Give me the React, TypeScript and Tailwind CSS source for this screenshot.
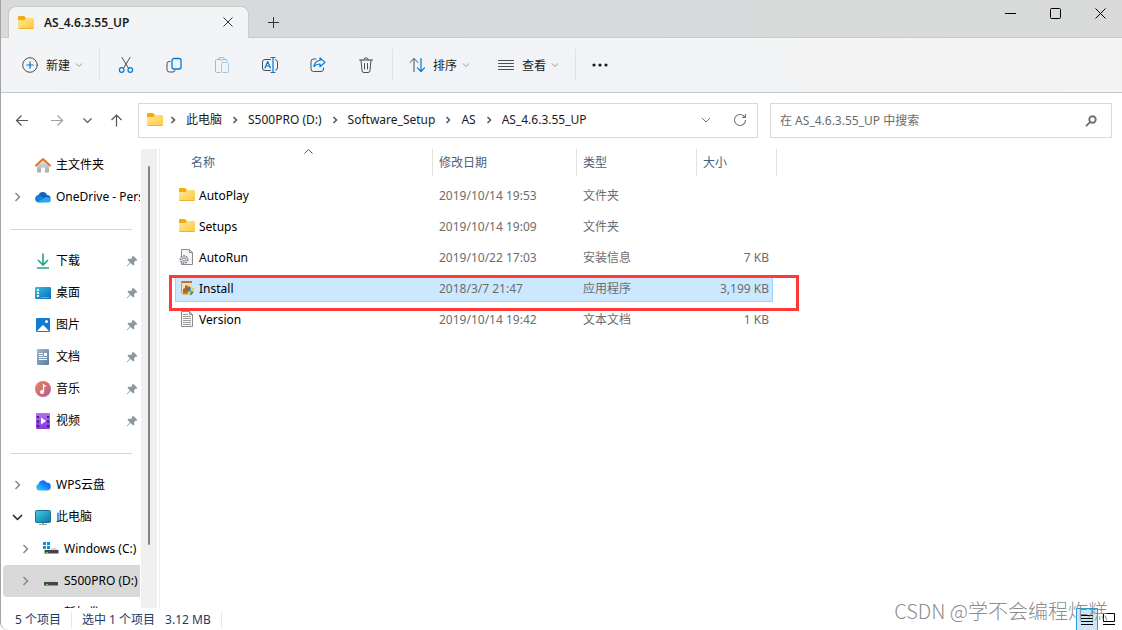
import type { ReactNode } from "react";

type IconProps = { className?: string };

const Chevron = ({ className = "" }: IconProps) => (
  <svg viewBox="0 0 8 8" className={`h-2 w-2 shrink-0 ${className}`} fill="none" stroke="currentColor">
    <path d="M2.5 1 5.5 4 2.5 7" />
  </svg>
);

const FolderIcon = () => (
  <svg viewBox="0 1 16 16" className="h-4 w-4 shrink-0">
    <defs>
      <linearGradient id="folder" x1="0" y1="0" x2="1" y2="1">
        <stop offset="0" stopColor="#ffe79c" />
        <stop offset="1" stopColor="#ffc93c" />
      </linearGradient>
    </defs>
    <path d="M0 3a1 1 0 0 1 1-1h5l2 2h7v9H1a1 1 0 0 1-1-1z" fill="#f2ac0c" />
    <path d="M0 6h6.5L8 4h7a1 1 0 0 1 1 1v9a1 1 0 0 1-1 1H1a1 1 0 0 1-1-1z" fill="url(#folder)" />
    <path d="M.5 14.500h15" stroke="#e9ae26" strokeWidth=".8" />
  </svg>
);

const HomeIcon = () => (
  <svg viewBox="0 0 16 16" className="h-4 w-4 shrink-0">
    <defs>
      <linearGradient id="wall" x1="0" y1="0" x2="0" y2="1">
        <stop offset="0" stopColor="#e6e6e6" />
        <stop offset="1" stopColor="#a6a6a6" />
      </linearGradient>
    </defs>
    <path d="M2 8 8 3l6 5v6.500a1 1 0 0 1-1 1h-3v-5H6v5H3a1 1 0 0 1-1-1z" fill="url(#wall)" />
    <path d="M1 8.500 8 2l7 6.500" fill="none" stroke="#e57622" strokeWidth="2" strokeLinecap="round" strokeLinejoin="round" />
  </svg>
);

const OneDriveIcon = () => (
  <svg viewBox="0 0 16 16" className="h-4 w-4 shrink-0">
    <path d="M1 11.500A3.500 3.500 0 0 1 3.500 6a4.500 4.500 0 0 1 8.500 0 3.700 3.700 0 0 1 3.500 4z" fill="#0b63c0" />
    <path d="M3.500 13.500a3.400 3.400 0 0 1-2.500-5.500c2-2.200 5-1.500 6 0l7 4.500z" fill="#1580d8" />
    <path d="m3 13 6-4c2-1.300 4-1 5-.3 2.800 1.500 2.200 4.800-.8 4.800H4.500z" fill="#2aa6ee" />
  </svg>
);

const DownloadIcon = () => (
  <svg viewBox="0 0 16 16" className="h-4 w-4 shrink-0" fill="none" stroke="#1fa883" strokeWidth="1.600">
    <path d="M8 .5v11M3 7l5 5 5-5M2 15h12" />
  </svg>
);

const DesktopIcon = () => (
  <svg viewBox="0 0 16 16" className="h-4 w-4 shrink-0">
    <defs>
      <linearGradient id="screen" x1="0" y1="0" x2="1" y2="1">
        <stop offset="0" stopColor="#33c5e0" />
        <stop offset="1" stopColor="#0a68b5" />
      </linearGradient>
    </defs>
    <rect y="2" width="16" height="12" rx="1" fill="url(#screen)" />
    <path d="M2 4h2v2H2zM2 7h2v2H2zM2 10h2v2H2z" fill="#fff" />
    <path d="M6 12.500h8" stroke="#54b6df" />
  </svg>
);

const PicturesIcon = () => (
  <svg viewBox="0 0 16 16" className="h-4 w-4 shrink-0">
    <rect x="1" y="1" width="14" height="14" rx="1" fill="#137bd0" />
    <path d="m2 14 5.300-5.500a1 1 0 0 1 1.400 0L14 14z" fill="#fff" />
    <circle cx="11.500" cy="4.500" r="1.500" fill="#fff" />
  </svg>
);

const DocumentsIcon = () => (
  <svg viewBox="0 0 16 16" className="h-4 w-4 shrink-0">
    <defs>
      <linearGradient id="doc" x1="0" y1="0" x2="1" y2="1">
        <stop offset="0" stopColor="#a4b8cd" />
        <stop offset="1" stopColor="#5a7c9f" />
      </linearGradient>
    </defs>
    <rect x="2" y="0" width="12" height="16" rx="1" fill="url(#doc)" />
    <path d="M4 4.500h4M4 6.500h4M4 8.500h8M4 10.500h8" stroke="#fff" />
    <path d="M9 4h3v3H9z" fill="#fff" />
  </svg>
);

const MusicIcon = () => (
  <svg viewBox="0 0 16 16" className="h-4 w-4 shrink-0">
    <defs>
      <linearGradient id="music" x1="0" y1="0" x2="1" y2="1">
        <stop offset="0" stopColor="#ec8550" />
        <stop offset="1" stopColor="#b25c9c" />
      </linearGradient>
    </defs>
    <circle cx="8" cy="8" r="8" fill="url(#music)" />
    <circle cx="7" cy="11" r="2" fill="#fff" />
    <path d="M8.500 11V4l2.500 1.500" fill="none" stroke="#fff" strokeWidth="1.300" />
  </svg>
);

const VideosIcon = () => (
  <svg viewBox="0 0 16 16" className="h-4 w-4 shrink-0">
    <defs>
      <linearGradient id="video" x1="0" y1="0" x2="0" y2="1">
        <stop offset="0" stopColor="#b472ee" />
        <stop offset="1" stopColor="#8539dc" />
      </linearGradient>
    </defs>
    <rect x="1" y="0" width="14" height="16" rx="1" fill="url(#video)" />
    <path d="M3 3v11M13 3v11" stroke="#3b1d78" strokeWidth="2" strokeDasharray="2 2.500" />
    <path d="m6 4.500 5 3.500-5 3.500z" fill="#fff" />
  </svg>
);

const WpsCloudIcon = () => (
  <svg viewBox="0 0 16 16" className="h-4 w-4 shrink-0">
    <defs>
      <linearGradient id="wps" x1="0" y1="1" x2="1" y2="0">
        <stop offset="0" stopColor="#2be0f5" />
        <stop offset=".6" stopColor="#1479fb" />
        <stop offset="1" stopColor="#0a5cf0" />
      </linearGradient>
    </defs>
    <path d="M4 13.500a3.300 3.300 0 0 1-.5-6.400 4.300 4.300 0 0 1 8-1.600A4 4 0 0 1 12 13.500z" fill="url(#wps)" />
  </svg>
);

const ComputerIcon = () => (
  <svg viewBox="0 0 16 16" className="h-4 w-4 shrink-0">
    <defs>
      <linearGradient id="pc" x1="0" y1="0" x2="1" y2="1">
        <stop offset="0" stopColor="#40cfe0" />
        <stop offset="1" stopColor="#1272a8" />
      </linearGradient>
    </defs>
    <path d="M7 13h2v2H7zM4 15h8v1H4z" fill="#9aa5ad" />
    <rect x=".5" y="1.500" width="15" height="12" rx="1" fill="url(#pc)" stroke="#176f96" />
  </svg>
);

const DriveIcon = ({ windows }: { windows?: boolean }) => (
  <svg viewBox="0 0 16 16" className="h-4 w-4 shrink-0">
    <path d={windows ? "M8 7h5l2 2.500H8z" : "M3.500 7h9L15 9.500H1z"} fill="#d2d5d8" />
    <rect x={windows ? 1.5 : 1} y="9" width="14" height="3.500" rx=".5" fill="#454545" />
    <path d="M3 11.500h2" stroke="#63d450" />
    {windows && <path d="M0 1h3v3H0zM4 1h3v3H4zM0 5h3v3H0zM4 5h3v3H4z" fill="#138ed8" />}
  </svg>
);

const PinIcon = () => (
  <svg viewBox="0 0 12 12" className="h-3 w-3 shrink-0" fill="#8a979f">
    <path d="M7 .5 11.500 5l-1.400.8-.4-.2-1.600 1.600.2 2.300-1.100 1.100L4.600 8 1 11.400l-.4-.4L4 7.400 1.400 4.800l1.100-1.100 2.300.2L6.400 2.300l-.2-.4z" />
  </svg>
);

const ConfigFileIcon = () => (
  <svg viewBox="0 0 16 16" className="h-4 w-4 shrink-0" fill="none">
    <path d="M2.500.5h8l3 3v12h-11z" fill="#f7f7f7" stroke="#8b8b8b" />
    <path d="M10.500.5v3h3" stroke="#8b8b8b" />
    <circle cx="5" cy="10.500" r="3.700" fill="#dfe3e6" stroke="#78828a" strokeWidth="1.500" strokeDasharray="1.700 1" />
    <circle cx="5" cy="10.500" r="1.500" fill="#fff" stroke="#78828a" />
  </svg>
);

const TextFileIcon = () => (
  <svg viewBox="0 0 16 16" className="h-4 w-4 shrink-0" fill="none">
    <path d="M2.500.5h8l3 3v12h-11z" fill="#fafafa" stroke="#8b8b8b" />
    <path d="M10.500.5v3h3" stroke="#8b8b8b" />
    <path d="M4 3.500h5M4 5.500h8M4 7.500h8M4 9.500h8M4 11.500h8M4 13.500h8" stroke="#9c9c9c" />
  </svg>
);

const InstallerIcon = () => (
  <svg viewBox="0 0 16 16" className="h-4 w-4 shrink-0">
    <path d="M2 1h11v13H3.500L2 12z" fill="#f2ddb3" />
    <path d="M2 1h11v2H2z" fill="#b9762d" />
    <path d="M2 1h1v12H2z" fill="#d49a4e" />
    <path d="M4 9l2-1V6l2-1 1 2 2-1v7H4z" fill="#b5651d" />
    <path d="M3 13h6v1.500H4z" fill="#e08b1d" />
    <path d="M11.500 7.500 15 8.600c0 3.500-1 5.400-3.500 6.900C9 14 8 12 8 8.600z" fill="#2583d8" />
    <path d="M11.500 7.500 15 8.600V11.500h-3.500zM8.200 11.500h3.300v4c-1.800-1-2.900-2.300-3.300-4z" fill="#fbd12f" />
  </svg>
);

const ToolIcon = ({ children }: { children: ReactNode }) => (
  <svg viewBox="0 0 16 16" className="h-4 w-4 shrink-0" fill="none" stroke="#4d4d4d" strokeLinecap="round" strokeLinejoin="round">
    {children}
  </svg>
);

const tools = [
  {
    label: "剪切",
    icon: (
      <>
        <path d="m4 .5 6.200 10.300M12 .5 5.800 10.800" />
        <circle cx="3.700" cy="13" r="2.300" stroke="#0078d4" strokeWidth="1.200" />
        <circle cx="12.300" cy="13" r="2.300" stroke="#0078d4" strokeWidth="1.200" />
      </>
    ),
  },
  {
    label: "复制",
    icon: (
      <>
        <path d="M4 4.500H3a2 2 0 0 0-2 2v6a2.500 2.500 0 0 0 2.500 2.500H7a2 2 0 0 0 2-1.500" />
        <rect x="6" y="1.500" width="9" height="10.500" rx="2" stroke="#0078d4" strokeWidth="1.300" />
      </>
    ),
  },
  {
    label: "粘贴",
    icon: (
      <>
        <path d="M5 2.500H2.500a1 1 0 0 0-1 1v11a1 1 0 0 0 1 1H6M10 2.500h2a1 1 0 0 1 1 1V4M5 1.500A1 1 0 0 1 6 .6h3a1 1 0 0 1 0 2.400H6a1 1 0 0 1-1-1.500z" stroke="#b5b5b5" />
        <rect x="7.500" y="5.500" width="7" height="10" rx="1" stroke="#9fc9ea" />
      </>
    ),
  },
  {
    label: "重命名",
    icon: (
      <>
        <path d="M8.500 2.500H3A2.500 2.500 0 0 0 .5 5v6A2.500 2.500 0 0 0 3 13.500h5.500M13.500 2.700A2.500 2.500 0 0 1 15.500 5v6a2.500 2.500 0 0 1-2 2.300" />
        <path d="M9 .5h4M11 .5v15M9 15.500h4M3 11l2.700-6.500L8.400 11M4 9h3.500" stroke="#0078d4" strokeWidth="1.200" />
      </>
    ),
  },
  {
    label: "共享",
    icon: (
      <>
        <path d="M6 2H3.500A2.500 2.500 0 0 0 1 4.500v7.500a2.500 2.500 0 0 0 2.500 2.500H11a2.500 2.500 0 0 0 2.500-2.500v-1" />
        <path d="M10 1v2.500C6.500 3.600 4.500 6 4 9.500 5.500 7.700 7.500 7 10 7v2.800L15 5.400z" stroke="#0078d4" strokeWidth="1.200" />
      </>
    ),
  },
  {
    label: "删除",
    icon: <path d="M1.500 3h13M5.800 3a2.200 2.200 0 0 1 4.400 0M3 3l1 10.500A2 2 0 0 0 6 15.500h4a2 2 0 0 0 2-2L13 3M6.500 6.500v5.500M9.500 6.500v5.500" />,
  },
];

const places = [
  { name: "下载", icon: <DownloadIcon /> },
  { name: "桌面", icon: <DesktopIcon /> },
  { name: "图片", icon: <PicturesIcon /> },
  { name: "文档", icon: <DocumentsIcon /> },
  { name: "音乐", icon: <MusicIcon /> },
  { name: "视频", icon: <VideosIcon /> },
];

const crumbs = ["此电脑", "S500PRO (D:)", "Software_Setup", "AS", "AS_4.6.3.55_UP"];

const files = [
  { name: "AutoPlay", date: "2019/10/14 19:53", type: "文件夹", size: "", icon: <FolderIcon /> },
  { name: "Setups", date: "2019/10/14 19:09", type: "文件夹", size: "", icon: <FolderIcon /> },
  { name: "AutoRun", date: "2019/10/22 17:03", type: "安装信息", size: "7 KB", icon: <ConfigFileIcon /> },
  { name: "Install", date: "2018/3/7 21:47", type: "应用程序", size: "3,199 KB", icon: <InstallerIcon />, selected: true },
  { name: "Version", date: "2019/10/14 19:42", type: "文本文档", size: "1 KB", icon: <TextFileIcon /> },
];

interface NavRowProps {
  name: string;
  icon: ReactNode;
  arrow?: "right" | "down";
  nested?: boolean;
  pinned?: boolean;
  selected?: boolean;
}

const NavRow = ({ name, icon, arrow, nested, pinned, selected }: NavRowProps) => (
  <li>
    <a
      href="#"
      className={`flex h-8 items-center overflow-hidden whitespace-nowrap ${nested ? "pl-4" : "pl-2"} ${
        selected ? "rounded-l-sm bg-[#d9d9d9]" : ""
      }`}
    >
      <span className="flex w-6 shrink-0">
        {arrow && (
          <svg
            viewBox="0 0 12 12"
            className={`h-3 w-3 ${arrow === "down" ? "text-[#222]" : "text-[#888]"}`}
            fill="none"
            stroke="currentColor"
            strokeWidth="1.500"
          >
            <path d={arrow === "down" ? "M2 4 6.500 8.500 11 4" : "M4.500 2 8.500 6 4.500 10"} />
          </svg>
        )}
      </span>
      {icon}
      <span className="ml-[5px]">{name}</span>
      {pinned && (
        <span className="mr-[2px] ml-auto">
          <PinIcon />
        </span>
      )}
    </a>
  </li>
);

const NavDivider = () => (
  <li className="flex h-8 items-center px-2">
    <hr className="w-full border-[#d4d4d4]" />
  </li>
);

const TitleBar = () => (
  <header className="flex h-[38px] shrink-0 items-end border-b border-[#c8cccc] bg-linear-to-r from-[#dadada] via-[#d6dada] via-40% to-[#dadada]">
    <div className="-mb-px ml-[7px] flex h-8 w-[241px] items-center rounded-t-lg border border-b-0 border-[#c8cccc] bg-[#f3f4f6] pr-3 pl-[9px]">
      <FolderIcon />
      <span className="ml-[10px] font-semibold text-[#1b1b1b]">AS_4.6.3.55_UP</span>
      <button aria-label="关闭标签页" className="ml-auto flex h-4 w-4 items-center justify-center pb-[2px]">
        <svg viewBox="0 0 10 10" className="h-[10px] w-[10px]" stroke="#333">
          <path d="m.5.5 9 9M9.500.5l-9 9" />
        </svg>
      </button>
    </div>
    <button aria-label="新建标签页" className="flex h-[30px] w-12 items-center justify-center">
      <svg viewBox="0 0 11 11" className="h-[11px] w-[11px]" stroke="#333">
        <path d="M5.500 0v11M0 5.500h11" />
      </svg>
    </button>
    <div className="-mr-px ml-auto flex self-start text-black">
      <button aria-label="最小化" className="flex h-[26px] w-[45px] items-center justify-center">
        <svg viewBox="0 0 11 11" className="h-[11px] w-[11px]" stroke="currentColor">
          <path d="M0 5.500h11" />
        </svg>
      </button>
      <button aria-label="最大化" className="flex h-[26px] w-[45px] items-center justify-center">
        <svg viewBox="0 0 11 11" className="h-[11px] w-[11px]" fill="none" stroke="currentColor">
          <rect x=".5" y=".5" width="10" height="10" rx="1" />
        </svg>
      </button>
      <button aria-label="关闭" className="flex h-[26px] w-[45px] items-center justify-center">
        <svg viewBox="0 0 11 11" className="h-[11px] w-[11px]" stroke="currentColor">
          <path d="m.5.5 10 10M10.500.5l-10 10" />
        </svg>
      </button>
    </div>
  </header>
);

const Separator = () => <div className="h-8 w-px shrink-0 bg-[#e0e1e3]" />;

const Toolbar = () => (
  <div className="flex h-[55px] shrink-0 items-center border-b border-[#c2c8cb] bg-linear-to-r from-[#f3f4f6] via-[#f2f3f6] to-[#f4f4f3] pl-[21px]">
    <button className="flex w-[77px] items-center">
      <ToolIcon>
        <circle cx="8" cy="8" r="7.300" />
        <path d="M8 4.800v6.400M4.800 8h6.400" stroke="#0078d4" strokeWidth="1.200" />
      </ToolIcon>
      <span className="mt-px ml-2">新建</span>
      <Chevron className="ml-[5px] rotate-90 text-[#999]" />
    </button>
    <Separator />
    <div className="flex w-[292px] justify-center">
      {tools.map((tool) => (
        <button key={tool.label} aria-label={tool.label} title={tool.label} className="flex w-12 justify-center">
          <ToolIcon>{tool.icon}</ToolIcon>
        </button>
      ))}
    </div>
    <Separator />
    <button className="ml-4 flex items-center">
      <ToolIcon>
        <path d="M5 14.500v-13M1 5.500l4-4 4 4" />
        <path d="M12 1.500v13M8.500 10.800l3.500 3.700 3.500-3.700" stroke="#0078d4" strokeWidth="1.200" />
      </ToolIcon>
      <span className="mt-px ml-2">排序</span>
      <Chevron className="ml-[5px] rotate-90 text-[#999]" />
    </button>
    <button className="ml-7 flex items-center">
      <ToolIcon>
        <path d="M.5 3.500h15M.5 6.500h15M.5 9.500h15M.5 12.500h15" />
      </ToolIcon>
      <span className="mt-px ml-2">查看</span>
      <Chevron className="mr-4 ml-[5px] rotate-90 text-[#999]" />
    </button>
    <Separator />
    <button aria-label="查看更多" className="flex w-12 justify-center">
      <svg viewBox="0 0 16 4" className="h-1 w-4" fill="#1b1b1b">
        <circle cx="2" cy="2" r="1.600" />
        <circle cx="8" cy="2" r="1.600" />
        <circle cx="14" cy="2" r="1.600" />
      </svg>
    </button>
  </div>
);

const AddressRow = () => (
  <div className="grid shrink-0 grid-cols-[124px_minmax(0,620fr)_minmax(0,354fr)] items-center py-[10px] pr-[10px] pl-[13px]">
    <nav className="flex items-center text-[#555]">
      <button aria-label="后退" className="mr-[19px]">
        <svg viewBox="0 0 16 16" className="h-4 w-4" fill="none" stroke="currentColor" strokeWidth="1.200">
          <path d="M14 7.500H2.500M7.500 2.500l-5 5 5 5" />
        </svg>
      </button>
      <button aria-label="前进" className="mr-[18px] text-[#a0a0a0]">
        <svg viewBox="0 0 16 16" className="h-4 w-4" fill="none" stroke="currentColor" strokeWidth="1.200">
          <path d="M2 7.500h11.500M8.500 2.500l5 5-5 5" />
        </svg>
      </button>
      <button aria-label="最近浏览的位置" className="mr-4">
        <svg viewBox="0 0 10 10" className="h-[10px] w-[10px]" fill="none" stroke="currentColor" strokeWidth="1.200">
          <path d="m.5 2.500 4 4 4-4" />
        </svg>
      </button>
      <button aria-label="向上">
        <svg viewBox="0 0 16 16" className="h-4 w-4" fill="none" stroke="currentColor" strokeWidth="1.200">
          <path d="M7.500 13.500V2M2.500 7l5-5 5 5" />
        </svg>
      </button>
    </nav>
    <div className="flex h-[35px] items-center border border-[#d9d9d9] bg-white pb-px pl-2 text-[#1b1b1b]">
      <FolderIcon />
      {crumbs.map((crumb) => (
        <span key={crumb} className="flex items-center whitespace-nowrap">
          <Chevron className="mr-[7px] ml-[6px] stroke-[1.5px] text-[#555]" />
          <a href="#" className="pr-[3px] pl-[2px]">
            {crumb}
          </a>
        </span>
      ))}
      <button aria-label="以前的位置" className="mr-[22px] ml-auto">
        <svg viewBox="0 0 10 10" className="h-[10px] w-[10px]" fill="none" stroke="#777">
          <path d="m1 3 4 4 4-4" />
        </svg>
      </button>
      <button aria-label="刷新" className="mr-[10px]">
        <svg viewBox="0 0 14 14" className="h-[14px] w-[14px]" fill="none" stroke="#777" strokeWidth="1.100">
          <path d="M12.500 7A5.500 5.500 0 1 1 10.800 3l1.700 1.500M12.500 1v3.500H9" />
        </svg>
      </button>
    </div>
    <label className="ml-3 flex h-[35px] items-center border border-[#d9d9d9] bg-white pr-[13px] pl-[9px]">
      <input
        type="search"
        aria-label="搜索"
        placeholder="在 AS_4.6.3.55_UP 中搜索"
        className="min-w-0 flex-1 outline-none placeholder:text-[#6b6b6b]"
      />
      <svg viewBox="0 0 14 14" className="h-[14px] w-[14px] shrink-0" fill="none" stroke="#707070" strokeWidth="1.900">
        <circle cx="8.500" cy="5.500" r="3.200" />
        <path d="M6.300 7.800 2 12.200" />
      </svg>
    </label>
  </div>
);

const Sidebar = () => (
  <div className="flex w-[159px] shrink-0 overflow-hidden border-r border-[#f0f0f0] pt-px pl-[2px]">
    <ul className="w-[137px] shrink-0 text-black">
      <NavRow name="主文件夹" icon={<HomeIcon />} />
      <NavRow name="OneDrive - Personal" icon={<OneDriveIcon />} arrow="right" />
      <NavDivider />
      {places.map((place) => (
        <NavRow key={place.name} name={place.name} icon={place.icon} pinned />
      ))}
      <NavDivider />
      <NavRow name="WPS云盘" icon={<WpsCloudIcon />} arrow="right" />
      <NavRow name="此电脑" icon={<ComputerIcon />} arrow="down" />
      <NavRow name="Windows (C:)" icon={<DriveIcon windows />} arrow="right" nested />
      <NavRow name="S500PRO (D:)" icon={<DriveIcon />} arrow="right" nested selected />
      <NavRow name="新加卷 (E:)" icon={<DriveIcon />} nested />
    </ul>
    <div className="ml-px flex w-4 justify-center bg-[#f0f0f0] pt-[17px] pb-[63px]">
      <div className="w-[2px] rounded-full bg-[#858585]" />
    </div>
  </div>
);

const HeadCell = ({ children, sorted, className = "pl-[6px]" }: { children: ReactNode; sorted?: boolean; className?: string }) => (
  <th className="relative h-[31px] p-0 text-left align-top font-normal">
    <div className={`flex h-[27px] items-center border-r border-[#e2e2e2] ${className}`}>{children}</div>
    {sorted && (
      <svg viewBox="0 0 10 6" className="absolute top-0 left-1/2 h-[6px] w-[10px]" fill="none" stroke="#555">
        <path d="m.5 4.500 4-4 4 4" />
      </svg>
    )}
  </th>
);

const FileList = () => (
  <main className="min-w-0 flex-1 overflow-hidden pt-px pl-[15px]">
    <table className="w-[602px] table-fixed border-separate border-spacing-0 text-[#6d6d6d]">
      <colgroup>
        <col className="w-[258px]" />
        <col className="w-36" />
        <col className="w-[120px]" />
        <col className="w-20" />
      </colgroup>
      <thead className="text-[#4c607a]">
        <tr>
          <HeadCell sorted className="pl-4">名称</HeadCell>
          <HeadCell>修改日期</HeadCell>
          <HeadCell>类型</HeadCell>
          <HeadCell>大小</HeadCell>
        </tr>
      </thead>
      <tbody>
        {files.map((file) => {
          const cell = `flex h-[27px] items-center ${file.selected ? "border-y border-[#99d1ff] bg-[#cce8ff]" : "border-y border-transparent"}`;
          return (
            <tr key={file.name} className="relative">
              <td className="px-0 py-[2px]">
                <div className={`${cell} border-l pl-[3px] text-black`}>
                  <span className="mb-px">{file.icon}</span>
                  <span className="ml-1">{file.name}</span>
                </div>
              </td>
              <td className="px-0 py-[2px]">
                <div className={`${cell} pl-[6px]`}>{file.date}</div>
              </td>
              <td className="px-0 py-[2px]">
                <div className={`${cell} pl-[6px]`}>{file.type}</div>
              </td>
              <td className="px-0 py-[2px]">
                <div className={`${cell} mr-1 justify-end border-r pr-[3px]`}>{file.size}</div>
                {file.selected && (
                  <div className="pointer-events-none absolute top-[2px] -left-[6px] h-9 w-[630px] border-3 border-[#ff3838]" />
                )}
              </td>
            </tr>
          );
        })}
      </tbody>
    </table>
  </main>
);

const StatusBar = () => (
  <footer className="relative flex h-[22px] shrink-0 items-center pr-[2px] pl-[14px] text-[#1e3a63]">
    <div className="flex pt-[2px]">
      <span className="border-r border-[#e8e8e8] pr-[10px]">5 个项目</span>
      <span className="pl-[10px]">选中 1 个项目</span>
      <span className="border-r border-[#e8e8e8] px-[10px]">3.12 MB</span>
    </div>
    <button aria-label="详细信息" className="ml-auto flex h-[22px] w-[22px] items-center justify-center border border-b-0 border-[#26a0da] bg-[#cbe8f6]">
      <svg viewBox="0 0 12 12" className="h-3 w-3" stroke="#000">
        <path d="M0 1.500h12M0 4.500h12M0 7.500h12M0 10.500h12" />
      </svg>
    </button>
    <button aria-label="大缩略图" className="flex h-[22px] w-[22px] items-center justify-center">
      <svg viewBox="0 0 12 12" className="h-3 w-3" fill="none" stroke="#000">
        <path d="M.5.5h11v8H.5zM0 11.500h12" />
      </svg>
    </button>
    <p className="pointer-events-none absolute right-[14px] bottom-1 font-['Noto_Sans_CJK_SC',sans-serif] text-[20px] leading-[30px] font-light whitespace-nowrap text-[#7d7d7d]/90">
      CSDN @学不会编程炸糕
    </p>
  </footer>
);

export default function App() {
  return (
    <div className="flex h-screen flex-col overflow-hidden rounded-bl-lg border-l border-[#a3a3a3] bg-white font-['Noto_Sans','Noto_Sans_CJK_SC',sans-serif] text-[12px] leading-4 text-[#1b1b1b]">
      <TitleBar />
      <Toolbar />
      <AddressRow />
      <div className="flex min-h-0 flex-1">
        <Sidebar />
        <FileList />
      </div>
      <StatusBar />
    </div>
  );
}
